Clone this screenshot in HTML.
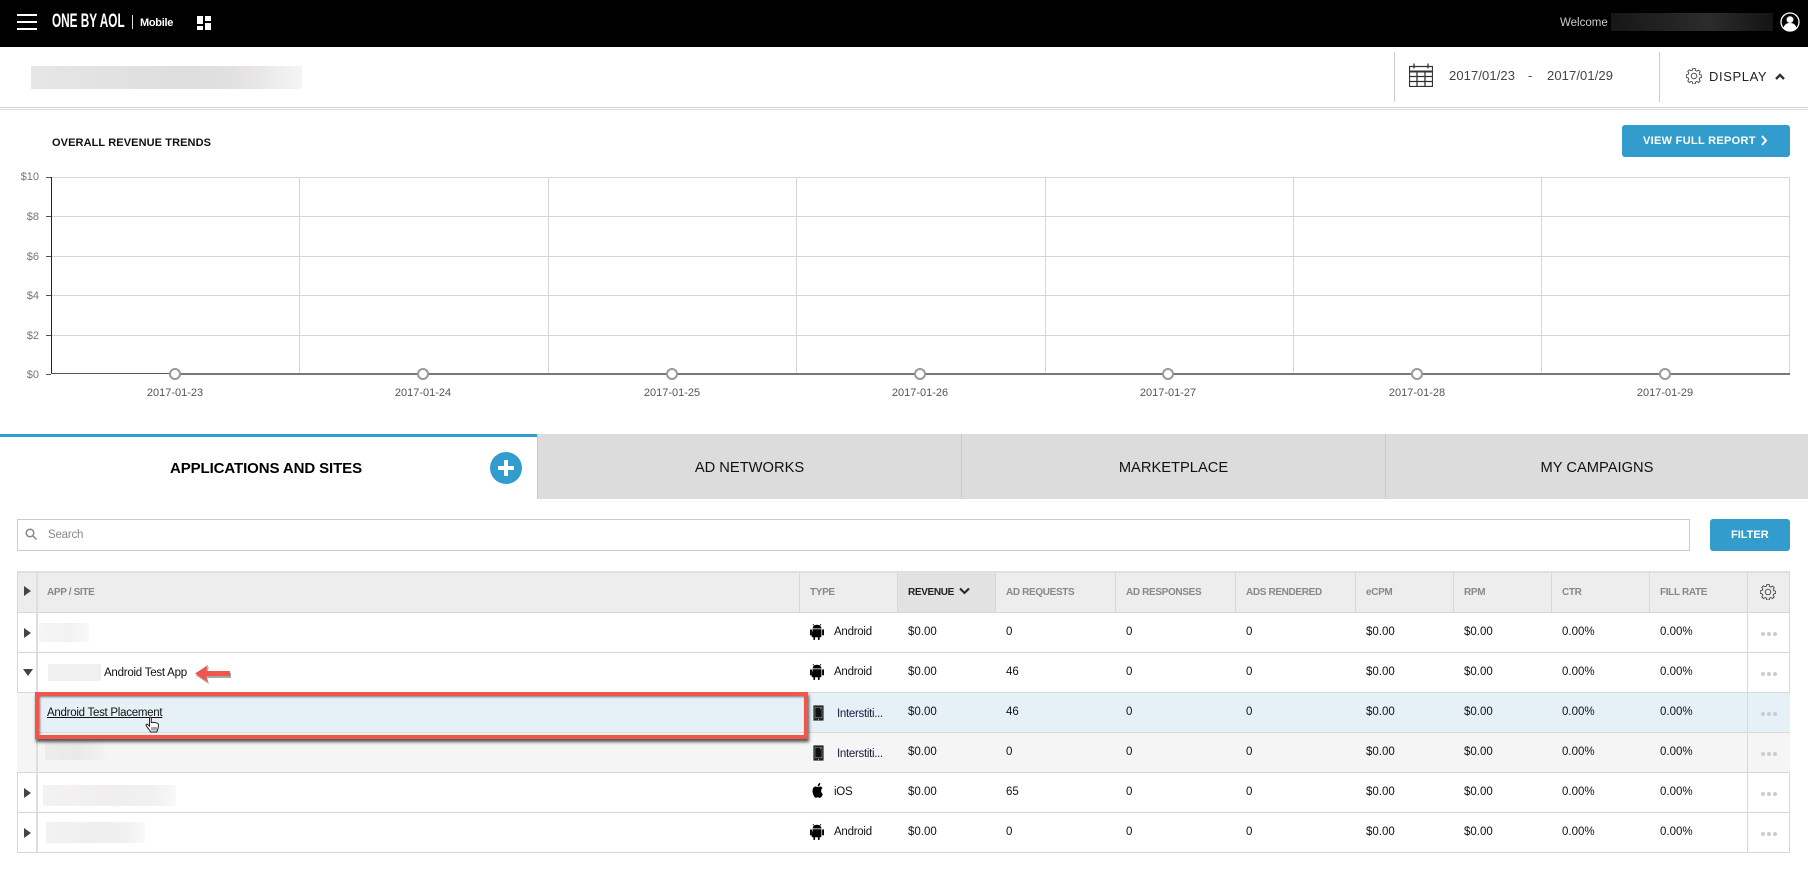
<!DOCTYPE html>
<html><head><meta charset="utf-8"><title>ONE BY AOL Mobile</title>
<style>
html,body{margin:0;padding:0;background:#fff}
body{width:1808px;height:877px;position:relative;overflow:hidden;font-family:"Liberation Sans",sans-serif;color:#222}
.a,.t{position:absolute}
.t{white-space:nowrap}
.gl{position:absolute;background:#d6d6d6}
.yl{position:absolute;right:1769px;font-size:11px;line-height:14px;color:#777}
.xl{position:absolute;width:80px;margin-left:-40px;text-align:center;font-size:11px;line-height:14px;top:386px;color:#555}
.pt{position:absolute;top:368px;width:8px;height:8px;margin-left:-6px;border:2px solid #999;border-radius:50%;background:#fff}
.tab{position:absolute;top:434px;height:65px;background:#dcdcdc;border-left:1px solid #c9c9c9;box-sizing:border-box;text-align:center;font-size:14.7px;line-height:69px;color:#111}
.hd{position:absolute;top:571px;left:17px;width:1773px;height:39px;background:#ededed;border-top:2px solid #e0e0e0;border-bottom:1px solid #d8d8d8}
.h{position:absolute;top:0;line-height:40px;font-size:10px;font-weight:bold;color:#888;letter-spacing:-.35px;white-space:nowrap}
.v{position:absolute;top:0;bottom:0;width:1px;background:#d8d8d8}
.row{position:absolute;left:17px;width:1773px;height:39px;border-bottom:1px solid #d8d8d8}
.row span{position:absolute;top:0;line-height:38px;font-size:11.5px;color:#111;white-space:nowrap}
.c3{left:891px}.c4{left:989px}.c5{left:1109px}.c6{left:1229px}.c7{left:1349px}.c8{left:1447px}.c9{left:1545px}.c10{left:1643px}
.row span.ty{left:817px;letter-spacing:-.25px}
.row span.ty2{left:820px;top:2px;letter-spacing:-.3px;color:#1a1a40}
.ic{position:absolute;left:793px;top:10px;width:14px;height:17px}
.ic2{position:absolute;left:796px;top:12px;width:11px;height:16px}
.tri{position:absolute;left:7px;top:15px;width:0;height:0;border-left:7px solid #444;border-top:5px solid transparent;border-bottom:5px solid transparent}
.dots{position:absolute;left:1744px;top:19px;width:4px;height:4px;border-radius:50%;background:#ccc;box-shadow:6px 0 0 #ccc,12px 0 0 #ccc}
.bl{position:absolute}
</style></head><body>

<!-- top nav -->
<div class="a" style="left:0;top:0;width:1808px;height:47px;background:#000"></div>
<div class="a" style="left:17px;top:14px;width:20px;height:2px;background:#fff"></div>
<div class="a" style="left:17px;top:21px;width:20px;height:2px;background:#fff"></div>
<div class="a" style="left:17px;top:28px;width:20px;height:2px;background:#fff"></div>
<div class="t" style="left:52px;top:12px;line-height:20px;font-size:19px;font-weight:bold;color:#fff;transform:scaleX(.62);transform-origin:0 0;width:120px">ONE BY AOL</div>
<div class="a" style="left:132px;top:15px;width:1px;height:14px;background:#ddd"></div>
<div class="t" style="left:140px;top:16px;line-height:15px;font-size:11px;font-weight:bold;color:#fff;letter-spacing:-.3px">Mobile</div>
<svg class="a" style="left:197px;top:16px" width="14" height="14" viewBox="0 0 14 14"><rect x="0" y="0" width="6" height="8" fill="#fff"/><rect x="8" y="0" width="6" height="5" fill="#fff"/><rect x="0" y="10" width="6" height="4" fill="#fff"/><rect x="8" y="7" width="6" height="7" fill="#fff"/></svg>
<div class="t" style="left:1560px;top:15px;line-height:16px;font-size:11.5px;color:#ccc">Welcome</div>
<div class="a" style="left:1611px;top:13px;width:162px;height:18px;background:linear-gradient(90deg,#171717,#2c2c2c 60%,#141414)"></div>
<svg class="a" style="left:1780px;top:12px" width="20" height="20" viewBox="0 0 20 20"><circle cx="10" cy="10" r="9" fill="#000" stroke="#fff" stroke-width="1.3"/><circle cx="10" cy="7.6" r="3.4" fill="#fff"/><path d="M3.6 16c.6-3.4 3-5 6.4-5s5.800 1.600 6.400 5a9 9 0 0 1-12.800 0z" fill="#fff"/></svg>

<!-- sub header -->
<div class="bl" style="left:31px;top:66px;width:271px;height:23px;background:linear-gradient(90deg,#e6e6e6,#dedede 55%,#e2e0e0 75%,#f5f5f5)"></div>
<div class="a" style="left:1394px;top:52px;width:1px;height:50px;background:#ccc"></div>
<div class="a" style="left:1659px;top:52px;width:1px;height:50px;background:#ccc"></div>
<div class="a" style="left:0;top:107px;width:1808px;height:1px;background:#d4d4d4"></div>
<div class="a" style="left:0;top:109px;width:1808px;height:1px;background:#ddd"></div>
<svg class="a" style="left:1409px;top:63px" width="24" height="24" viewBox="0 0 24 24" fill="none" stroke="#333"><path d="M.5 3.500h23v20H.5z" stroke-width="1.200"/><path d="M.5 8.500h23" stroke-width="2"/><path d="M.5 13.500h23M.5 18.500h23M8 9v14M16 9v14" stroke-width="1.300"/><path d="M5 .5v5M19 .5v5" stroke-width="1.300"/></svg>
<div class="t" style="left:1449px;top:68px;line-height:16px;font-size:13px;color:#444;letter-spacing:.1px">2017/01/23</div>
<div class="t" style="left:1528px;top:68px;line-height:16px;font-size:13px;color:#444">-</div>
<div class="t" style="left:1547px;top:68px;line-height:16px;font-size:13px;color:#444;letter-spacing:.1px">2017/01/29</div>
<svg class="a" style="left:1686px;top:68px" width="16" height="16" viewBox="0 0 16 16" fill="none" stroke="#444" stroke-width=".9"><circle cx="8" cy="8" r="2.800"/><path d="M6.800.6h2.400l.4 1.900 1.300.6 1.700-1 1.600 1.600-1 1.700.6 1.300 1.900.4v2.400l-1.900.4-.6 1.300 1 1.700-1.600 1.600-1.700-1-1.300.6-.4 1.900H6.800l-.4-1.900-1.300-.6-1.700 1-1.600-1.600 1-1.700-.6-1.300-1.900-.4V6.800l1.900-.4.6-1.300-1-1.700 1.600-1.600 1.700 1 1.300-.6z"/></svg>
<div class="t" style="left:1709px;top:69px;line-height:16px;font-size:13px;color:#222;letter-spacing:.6px">DISPLAY</div>
<svg class="a" style="left:1775px;top:73px" width="10" height="7" viewBox="0 0 10 7" fill="none" stroke="#333" stroke-width="2.400"><path d="M1 6l4-4 4 4"/></svg>

<!-- chart -->
<div class="t" style="left:52px;top:135px;line-height:16px;font-size:11px;font-weight:bold;color:#111;letter-spacing:.1px">OVERALL REVENUE TRENDS</div>
<div class="a" style="left:1622px;top:125px;width:168px;height:32px;background:#329ccc;border-radius:3px"></div>
<div class="t" style="left:1643px;top:133px;line-height:16px;font-size:11px;font-weight:bold;color:#fff;letter-spacing:.3px">VIEW FULL REPORT</div>
<svg class="a" style="left:1761px;top:135px" width="7" height="11" viewBox="0 0 7 11" fill="none" stroke="#fff" stroke-width="2"><path d="M1 1l4 4.500-4 4.500"/></svg>

<div class="gl" style="left:51px;top:177px;width:1739px;height:1px"></div>
<div class="gl" style="left:51px;top:216px;width:1739px;height:1px"></div>
<div class="gl" style="left:51px;top:256px;width:1739px;height:1px"></div>
<div class="gl" style="left:51px;top:295px;width:1739px;height:1px"></div>
<div class="gl" style="left:51px;top:335px;width:1739px;height:1px"></div>
<div class="gl" style="left:299px;top:177px;width:1px;height:197px"></div>
<div class="gl" style="left:548px;top:177px;width:1px;height:197px"></div>
<div class="gl" style="left:796px;top:177px;width:1px;height:197px"></div>
<div class="gl" style="left:1045px;top:177px;width:1px;height:197px"></div>
<div class="gl" style="left:1293px;top:177px;width:1px;height:197px"></div>
<div class="gl" style="left:1541px;top:177px;width:1px;height:197px"></div>
<div class="gl" style="left:1789px;top:177px;width:1px;height:197px"></div>
<div class="a" style="left:51px;top:177px;width:1px;height:197px;background:#222"></div>
<div class="a" style="left:46px;top:177px;width:5px;height:1px;background:#555"></div>
<div class="a" style="left:46px;top:216px;width:5px;height:1px;background:#555"></div>
<div class="a" style="left:46px;top:256px;width:5px;height:1px;background:#555"></div>
<div class="a" style="left:46px;top:295px;width:5px;height:1px;background:#555"></div>
<div class="a" style="left:46px;top:335px;width:5px;height:1px;background:#555"></div>
<div class="a" style="left:46px;top:374px;width:5px;height:1px;background:#555"></div>
<div class="a" style="left:51px;top:373px;width:124px;height:1px;background:#555"></div>
<div class="a" style="left:175px;top:373px;width:1615px;height:2px;background:#777"></div>
<div class="yl" style="top:170px">$10</div>
<div class="yl" style="top:210px">$8</div>
<div class="yl" style="top:250px">$6</div>
<div class="yl" style="top:289px">$4</div>
<div class="yl" style="top:329px">$2</div>
<div class="yl" style="top:368px">$0</div>
<div class="pt" style="left:175px"></div><div class="pt" style="left:423px"></div><div class="pt" style="left:672px"></div><div class="pt" style="left:920px"></div><div class="pt" style="left:1168px"></div><div class="pt" style="left:1417px"></div><div class="pt" style="left:1665px"></div>
<div class="xl" style="left:175px">2017-01-23</div>
<div class="xl" style="left:423px">2017-01-24</div>
<div class="xl" style="left:672px">2017-01-25</div>
<div class="xl" style="left:920px">2017-01-26</div>
<div class="xl" style="left:1168px">2017-01-27</div>
<div class="xl" style="left:1417px">2017-01-28</div>
<div class="xl" style="left:1665px">2017-01-29</div>

<!-- tabs -->
<div class="a" style="left:0;top:434px;width:537px;height:3px;background:#329ccc"></div>
<div class="t" style="left:170px;top:459px;line-height:20px;font-size:15px;font-weight:bold;color:#000;letter-spacing:-.1px">APPLICATIONS AND SITES</div>
<div class="a" style="left:490px;top:452px;width:32px;height:32px;border-radius:50%;background:#329ccc"></div>
<div class="a" style="left:498px;top:466px;width:16px;height:4px;background:#fff"></div>
<div class="a" style="left:504px;top:460px;width:4px;height:16px;background:#fff"></div>
<div class="tab" style="left:537px;width:424px">AD NETWORKS</div>
<div class="tab" style="left:961px;width:424px">MARKETPLACE</div>
<div class="tab" style="left:1385px;width:423px">MY CAMPAIGNS</div>

<!-- search -->
<div class="a" style="left:17px;top:519px;width:1671px;height:30px;border:1px solid #ccc"></div>
<svg class="a" style="left:25px;top:528px" width="12" height="12" viewBox="0 0 12 12" fill="none" stroke="#888" stroke-width="1.500"><circle cx="5" cy="5" r="3.800"/><path d="M8 8l3.500 3.500"/></svg>
<div class="t" style="left:48px;top:527px;line-height:16px;font-size:11.5px;color:#888;letter-spacing:-.2px">Search</div>
<div class="a" style="left:1710px;top:519px;width:80px;height:32px;background:#329ccc;border-radius:3px"></div>
<div class="t" style="left:1731px;top:527px;line-height:16px;font-size:11px;font-weight:bold;color:#fff">FILTER</div>

<!-- table header -->
<div class="hd">
  <div class="a" style="left:880px;top:0;width:98px;height:39px;background:#e2e2e2"></div>
  <div class="v" style="left:19px;width:2px;background:#dedede"></div><div class="v" style="left:782px"></div><div class="v" style="left:880px"></div><div class="v" style="left:978px"></div><div class="v" style="left:1098px"></div><div class="v" style="left:1218px"></div><div class="v" style="left:1338px"></div><div class="v" style="left:1436px"></div><div class="v" style="left:1534px"></div><div class="v" style="left:1632px"></div><div class="v" style="left:1730px"></div>
  <div class="tri" style="top:13px"></div>
  <div class="h" style="left:30px">APP / SITE</div>
  <div class="h" style="left:793px">TYPE</div>
  <div class="h" style="left:891px;color:#222">REVENUE</div>
  <svg class="a" style="left:942px;top:14px" width="11" height="9" viewBox="0 0 11 9" fill="none" stroke="#222" stroke-width="2"><path d="M1 1.500l4.500 4.500 4.500-4.500"/></svg>
  <div class="h" style="left:989px">AD REQUESTS</div>
  <div class="h" style="left:1109px">AD RESPONSES</div>
  <div class="h" style="left:1229px">ADS RENDERED</div>
  <div class="h" style="left:1349px">eCPM</div>
  <div class="h" style="left:1447px">RPM</div>
  <div class="h" style="left:1545px">CTR</div>
  <div class="h" style="left:1643px">FILL RATE</div>
  <svg class="a" style="left:1743px;top:11px" width="16" height="16" viewBox="0 0 16 16" fill="none" stroke="#444" stroke-width=".9"><circle cx="8" cy="8" r="2.800"/><path d="M6.800.6h2.400l.4 1.900 1.300.6 1.700-1 1.600 1.600-1 1.700.6 1.300 1.900.4v2.400l-1.900.4-.6 1.300 1 1.700-1.600 1.600-1.700-1-1.300.6-.4 1.900H6.800l-.4-1.900-1.300-.6-1.700 1-1.600-1.600 1-1.700-.6-1.300-1.900-.4V6.800l1.900-.4.6-1.300-1-1.700 1.600-1.600 1.700 1 1.300-.6z"/></svg>
</div>
<div class="a" style="left:17px;top:571px;width:1px;height:282px;background:#d8d8d8"></div>
<div class="a" style="left:1789px;top:571px;width:1px;height:282px;background:#d8d8d8"></div>

<!-- rows -->
<div class="row" style="top:613px">
  <div class="tri"></div>
  <div class="bl" style="left:22px;top:10px;width:50px;height:19px;background:linear-gradient(90deg,#f5f5f5,#f2f2f2 60%,#f9f9f9)"></div>
  <svg class="ic" viewBox="0 0 14 17"><path d="M3 1l1.300 1.800M11 1L9.700 2.800" stroke="#000" stroke-width=".7"/><path d="M2.600 5.500C2.800 3.200 4.700 1.800 7 1.800s4.200 1.400 4.400 3.700z" fill="#000"/><path d="M2.600 6.200h8.800v7c0 .6-.4 1-1 1h-.8v2c0 1-1.700 1-1.700 0v-2H5.100v2c0 1-1.700 1-1.700 0v-2h-.8c-.6 0-1-.4-1-1z" fill="#000"/><rect x="0" y="6.200" width="1.900" height="6.300" rx=".95" fill="#000"/><rect x="12.100" y="6.200" width="1.900" height="6.300" rx=".95" fill="#000"/></svg>
  <span class="ty">Android</span><span class="c3">$0.00</span><span class="c4">0</span><span class="c5">0</span><span class="c6">0</span><span class="c7">$0.00</span><span class="c8">$0.00</span><span class="c9">0.00%</span><span class="c10">0.00%</span><div class="dots"></div>
</div>
<div class="row" style="top:653px">
  <div class="a" style="left:6px;top:16px;width:0;height:0;border-top:7px solid #444;border-left:5px solid transparent;border-right:5px solid transparent"></div>
  <div class="bl" style="left:31px;top:11px;width:53px;height:17px;background:#f0f0f0"></div>
  <span style="left:87px;letter-spacing:-.24px;top:1px">Android Test App</span>
  <svg class="ic" viewBox="0 0 14 17"><path d="M3 1l1.300 1.800M11 1L9.700 2.800" stroke="#000" stroke-width=".7"/><path d="M2.600 5.500C2.800 3.200 4.700 1.800 7 1.800s4.200 1.400 4.400 3.700z" fill="#000"/><path d="M2.600 6.200h8.800v7c0 .6-.4 1-1 1h-.8v2c0 1-1.700 1-1.700 0v-2H5.100v2c0 1-1.700 1-1.700 0v-2h-.8c-.6 0-1-.4-1-1z" fill="#000"/><rect x="0" y="6.200" width="1.900" height="6.300" rx=".95" fill="#000"/><rect x="12.100" y="6.200" width="1.900" height="6.300" rx=".95" fill="#000"/></svg>
  <span class="ty">Android</span><span class="c3">$0.00</span><span class="c4">46</span><span class="c5">0</span><span class="c6">0</span><span class="c7">$0.00</span><span class="c8">$0.00</span><span class="c9">0.00%</span><span class="c10">0.00%</span><div class="dots"></div>
</div>
<div class="row" style="top:693px;background:#e6f1f7">
  <div class="a" style="left:0;top:0;width:19px;height:40px;background:#f5f5f5"></div>
  <svg class="ic2" viewBox="0 0 11 16"><rect x=".5" y=".5" width="10" height="15" rx="1" fill="#222" stroke="#777"/><rect x="2" y="2.200" width="7" height="10.600" fill="#111" stroke="#ccc" stroke-width=".4"/><circle cx="7.300" cy="3.700" r=".5" fill="#ddd"/><circle cx="5.500" cy="14.300" r=".6" fill="#bbb"/></svg>
  <span class="ty2">Interstiti...</span><span class="c3">$0.00</span><span class="c4">46</span><span class="c5">0</span><span class="c6">0</span><span class="c7">$0.00</span><span class="c8">$0.00</span><span class="c9">0.00%</span><span class="c10">0.00%</span><div class="dots"></div>
</div>
<div class="row" style="top:733px;background:#f5f5f5">
  <div class="bl" style="left:28px;top:7px;width:60px;height:20px;background:linear-gradient(90deg,#ececec,#e9e9e9 50%,#f2f2f2)"></div>
  <svg class="ic2" viewBox="0 0 11 16"><rect x=".5" y=".5" width="10" height="15" rx="1" fill="#222" stroke="#777"/><rect x="2" y="2.200" width="7" height="10.600" fill="#111" stroke="#ccc" stroke-width=".4"/><circle cx="7.300" cy="3.700" r=".5" fill="#ddd"/><circle cx="5.500" cy="14.300" r=".6" fill="#bbb"/></svg>
  <span class="ty2">Interstiti...</span><span class="c3">$0.00</span><span class="c4">0</span><span class="c5">0</span><span class="c6">0</span><span class="c7">$0.00</span><span class="c8">$0.00</span><span class="c9">0.00%</span><span class="c10">0.00%</span><div class="dots"></div>
</div>
<div class="row" style="top:773px">
  <div class="tri"></div>
  <div class="bl" style="left:26px;top:12px;width:133px;height:21px;background:linear-gradient(90deg,#f3f2f2,#f0eeee 50%,#f1f0f0 80%,#f8f8f8)"></div>
  <svg class="ic" style="top:9px" viewBox="0 0 24 24" preserveAspectRatio="none"><path d="M18.700 21.500c-1.100 1.100-2.300 1-3.500.4-1.200-.5-2.300-.5-3.600 0-1.500.7-2.400.5-3.400-.4C2.500 15.600 3.300 6.700 9.700 6.400c1.600.1 2.700.9 3.600.9 1.400-.3 2.700-1.100 4.200-1 1.800.2 3.100.9 4 2.200-3.700 2.200-2.800 7.100.5 8.500-.7 1.800-1.600 3.500-3.300 5zM13.200 6.300C13 3.700 15.100 1.500 17.600 1.300c.4 3-2.700 5.200-4.400 5z" fill="#000"/></svg>
  <span class="ty">iOS</span><span class="c3">$0.00</span><span class="c4">65</span><span class="c5">0</span><span class="c6">0</span><span class="c7">$0.00</span><span class="c8">$0.00</span><span class="c9">0.00%</span><span class="c10">0.00%</span><div class="dots"></div>
</div>
<div class="row" style="top:813px">
  <div class="tri"></div>
  <div class="bl" style="left:29px;top:9px;width:99px;height:21px;background:linear-gradient(90deg,#f3f2f2,#f0eeee 50%,#f1f0f0 80%,#f9f9f9)"></div>
  <svg class="ic" viewBox="0 0 14 17"><path d="M3 1l1.300 1.800M11 1L9.700 2.800" stroke="#000" stroke-width=".7"/><path d="M2.600 5.500C2.800 3.200 4.700 1.800 7 1.800s4.200 1.400 4.400 3.700z" fill="#000"/><path d="M2.600 6.200h8.800v7c0 .6-.4 1-1 1h-.8v2c0 1-1.700 1-1.700 0v-2H5.100v2c0 1-1.700 1-1.700 0v-2h-.8c-.6 0-1-.4-1-1z" fill="#000"/><rect x="0" y="6.200" width="1.900" height="6.300" rx=".95" fill="#000"/><rect x="12.100" y="6.200" width="1.900" height="6.300" rx=".95" fill="#000"/></svg>
  <span class="ty">Android</span><span class="c3">$0.00</span><span class="c4">0</span><span class="c5">0</span><span class="c6">0</span><span class="c7">$0.00</span><span class="c8">$0.00</span><span class="c9">0.00%</span><span class="c10">0.00%</span><div class="dots"></div>
</div>
<div class="a" style="left:36px;top:613px;width:2px;height:240px;background:#dedede"></div>
<div class="a" style="left:1747px;top:613px;width:1px;height:240px;background:#d8d8d8"></div>

<!-- annotation: red box -->
<div class="a" style="left:35px;top:692px;width:765px;height:39px;border:4px solid #f0564c;box-shadow:1px 3px 3px rgba(0,0,0,.65),inset 1px 1px 2px rgba(0,0,0,.5)"></div>
<div class="t" style="left:47px;top:705px;line-height:16px;font-size:11.5px;color:#111;letter-spacing:-.27px;text-decoration:underline">Android Test Placement</div>
<svg class="a" style="left:145px;top:716px" width="15" height="17" viewBox="0 0 15 17"><path d="M4.500 1.500c.8-.8 1.800-.3 1.800.6v4.500c1.500-.4 5.700-.2 6.700 1 .7.800.5 3.800-.1 5.500-.4 1.200-.8 2-1.200 2.900H5.800L1.300 9.800c-.8-1 .3-2.100 1.300-1.300l1.900 1.600z" fill="#fff" stroke="#222" stroke-width="1"/><path d="M7 11v3.500M9 11v3.500M11 11v3.500" stroke="#222" stroke-width=".8"/></svg>

<!-- annotation: arrow -->
<svg class="a" style="left:194px;top:664px" width="38" height="22" viewBox="0 0 38 22"><path d="M1 9.500L14 1 12 7h24v5H12l2 6z" fill="#000" opacity=".35" transform="translate(1 2)"/><path d="M1 9.500L14 1 12 7h24v5H12l2 6z" fill="#f0564c"/></svg>

</body></html>
